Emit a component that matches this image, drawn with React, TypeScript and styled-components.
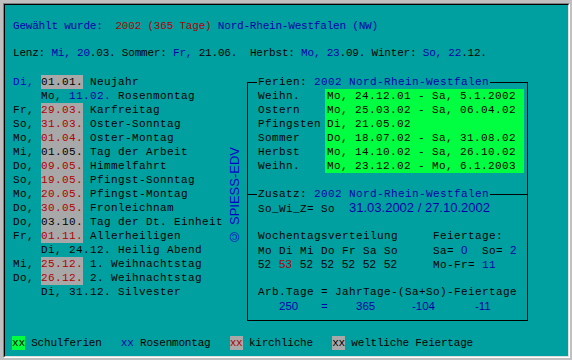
import styled, { createGlobalStyle } from "styled-components";

const C = {
  chrome: "#c0c0c0",
  teal: "#00a0a0",
  blue: "#0000a8",
  light: "#0000c8",
  red: "#b00000",
  gray: "#a8a8a8",
  green: "#00ff40",
  ink: "#000",
};

const MONO = `"Liberation Mono", "DejaVu Sans Mono", monospace`;
const SANS = `"Liberation Sans", Arial, sans-serif`;

const GlobalStyle = createGlobalStyle`
  html, body {
    margin: 0;
    padding: 0;
    background: ${C.chrome};
  }
`;

const Screen = styled.div`
  width: 572px;
  height: 360px;
  box-sizing: border-box;
  padding: 3px 2px 2px 3px;
  background: ${C.chrome};
`;

const Bevel = styled.div`
  height: 100%;
  box-sizing: border-box;
  border: 1px solid;
  border-color: #808080 #fff #fff #808080;
`;

const Panel = styled.div`
  height: 100%;
  box-sizing: border-box;
  border: 1px solid;
  border-color: #000 #dfdfdf #dfdfdf #000;
  background: ${C.teal};
  padding-left: 8px;
  font-family: ${MONO};
  font-size: 11px;
  line-height: 14px;
  color: ${C.ink};
  white-space: pre;
`;

const T = styled.span<{ $c?: string }>`
  color: ${(p) => p.$c ?? C.ink};
`;

const Sans = styled.span<{ $size?: number; $c?: string }>`
  font-family: ${SANS};
  font-size: ${(p) => p.$size ?? 11.5}px;
  letter-spacing: 0;
  color: ${(p) => p.$c ?? C.blue};
`;

const HeadLine = styled.div<{ $gap: number }>`
  height: 14px;
  margin-top: ${(p) => p.$gap}px;
  letter-spacing: -0.2px;
`;

const Main = styled.div`
  display: flex;
  align-items: flex-start;
  margin-top: 15px;
  letter-spacing: 0.4px;
`;

const HolidayList = styled.div`
  width: 216px;
`;

const Row = styled.div<{ $plain?: boolean }>`
  height: 14px;
  padding-left: ${(p) => (p.$plain ? 28 : 0)}px;
`;

const DateBox = styled.span<{ $c: string }>`
  display: inline-block;
  height: 14px;
  background: ${C.gray};
  color: ${(p) => p.$c};
`;

const Copyright = styled.div`
  width: 12px;
  margin: 72px 6px 0 0;
  writing-mode: vertical-rl;
  transform: rotate(180deg);
  font-family: ${SANS};
  font-size: 13px;
  line-height: 12px;
  letter-spacing: 0;
  color: ${C.light};
`;

const Frame = styled.fieldset`
  margin: 0;
  padding: 0 0 7px 0;
  min-width: 0;
  width: 281px;
  box-sizing: border-box;
  border: 1px solid #000;
`;

const Title = styled.legend`
  margin-left: 9px;
  padding: 0 1px;
  line-height: 14px;
`;

const FerienBlock = styled.div`
  display: flex;
  padding-left: 10px;
`;

const Labels = styled.div`
  width: 67px;
`;

const Green = styled.div`
  width: 199px;
  box-sizing: border-box;
  padding-left: 2px;
  background: ${C.green};
`;

const Line = styled.div<{ $gap?: number }>`
  height: 14px;
  padding-left: 10px;
  margin-top: ${(p) => p.$gap ?? 0}px;
`;

const Divider = styled.div`
  display: flex;
  align-items: center;
  height: 14px;
  margin-top: 14px;

  &::before {
    content: "";
    width: 9px;
    height: 1px;
    background: #000;
  }
  &::after {
    content: "";
    flex: 1;
    height: 1px;
    background: #000;
  }
`;

const DividerText = styled.span`
  padding: 0 1px;
`;

const Cell = styled.span<{ $n: number }>`
  display: inline-block;
  width: ${(p) => p.$n * 7}px;
`;

const LegendRow = styled.div`
  margin-top: 15px;
  margin-left: -1px;
  height: 14px;
  letter-spacing: -0.2px;
`;

const Swatch = styled.span<{ $bg?: string; $c: string }>`
  display: inline-block;
  height: 14px;
  background: ${(p) => p.$bg ?? "transparent"};
  color: ${(p) => p.$c};
`;

type Holiday = {
  wd: string;
  date: string;
  name: string;
  kind?: "kirch" | "welt";
  wdBlue?: boolean;
  dateBlue?: boolean;
};

const holidays: Holiday[] = [
  { wd: "Di,", date: "01.01.", name: "Neujahr", kind: "welt", wdBlue: true },
  { wd: "Mo,", date: "11.02.", name: "Rosenmontag", dateBlue: true },
  { wd: "Fr,", date: "29.03.", name: "Karfreitag", kind: "kirch" },
  { wd: "So,", date: "31.03.", name: "Oster-Sonntag", kind: "kirch" },
  { wd: "Mo,", date: "01.04.", name: "Oster-Montag", kind: "kirch" },
  { wd: "Mi,", date: "01.05.", name: "Tag der Arbeit", kind: "welt" },
  { wd: "Do,", date: "09.05.", name: "Himmelfahrt", kind: "kirch" },
  { wd: "So,", date: "19.05.", name: "Pfingst-Sonntag", kind: "kirch" },
  { wd: "Mo,", date: "20.05.", name: "Pfingst-Montag", kind: "kirch" },
  { wd: "Do,", date: "30.05.", name: "Fronleichnam", kind: "kirch" },
  { wd: "Do,", date: "03.10.", name: "Tag der Dt. Einheit", kind: "welt" },
  { wd: "Fr,", date: "01.11.", name: "Allerheiligen", kind: "kirch" },
  { wd: "Di,", date: "24.12.", name: "Heilig Abend" },
  { wd: "Mi,", date: "25.12.", name: "1. Weihnachtstag", kind: "kirch" },
  { wd: "Do,", date: "26.12.", name: "2. Weihnachtstag", kind: "kirch" },
  { wd: "Di,", date: "31.12.", name: "Silvester" },
];

const ferien = [
  ["Weihn.", "Mo, 24.12.01 - Sa, 5.1.2002"],
  ["Ostern", "Mo, 25.03.02 - Sa, 06.04.02"],
  ["Pfingsten", "Di, 21.05.02"],
  ["Sommer", "Do, 18.07.02 - Sa, 31.08.02"],
  ["Herbst", "Mo, 14.10.02 - Sa, 26.10.02"],
  ["Weihn.", "Mo, 23.12.02 - Mo, 6.1.2003"],
];

const weekCounts = [52, 53, 52, 52, 52, 52, 52];

function HolidayRow({ h }: { h: Holiday }) {
  if (!h.kind) {
    return (
      <Row $plain>
        <T>{h.wd} </T>
        <T $c={h.dateBlue ? C.blue : C.ink}>{h.date}</T>
        <T> {h.name}</T>
      </Row>
    );
  }
  return (
    <Row>
      <T $c={h.wdBlue ? C.light : C.ink}>{h.wd} </T>
      <DateBox $c={h.kind === "kirch" ? C.red : C.ink}>{h.date}</DateBox>
      <T> {h.name}</T>
    </Row>
  );
}

export default function App() {
  return (
    <Screen>
      <GlobalStyle />
      <Bevel>
        <Panel>
          <HeadLine $gap={14}>
            <T $c={C.blue}>Gewählt wurde:  </T>
            <T $c={C.red}>2002 (365 Tage)</T>
            <T $c={C.blue}> Nord-Rhein-Westfalen (NW)</T>
          </HeadLine>
          <HeadLine $gap={13}>
            <T>Lenz: </T>
            <T $c={C.blue}>Mi, 20</T>
            <T>.03. Sommer: </T>
            <T $c={C.blue}>Fr, </T>
            <T>21.06.  Herbst: </T>
            <T $c={C.blue}>Mo, 23</T>
            <T>.09. Winter: </T>
            <T $c={C.blue}>So, 22</T>
            <T>.12.</T>
          </HeadLine>

          <Main>
            <HolidayList>
              {holidays.map((h, i) => (
                <HolidayRow key={i} h={h} />
              ))}
            </HolidayList>

            <Copyright>© SPIESS-EDV</Copyright>

            <Frame>
              <Title>
                <T>Ferien: </T>
                <T $c={C.blue}>2002 Nord-Rhein-Westfalen</T>
              </Title>
              <FerienBlock>
                <Labels>
                  {ferien.map(([label], i) => (
                    <div key={i}>{label}</div>
                  ))}
                </Labels>
                <Green>
                  {ferien.map(([, range], i) => (
                    <div key={i}>{range}</div>
                  ))}
                </Green>
              </FerienBlock>

              <Divider>
                <DividerText>
                  <T>Zusatz: </T>
                  <T $c={C.blue}>2002 Nord-Rhein-Westfalen</T>
                </DividerText>
              </Divider>
              <Line>
                <T>So_Wi_Z= So  </T>
                <Sans $size={13}>31.03.2002 / 27.10.2002</Sans>
              </Line>

              <Line $gap={14}>Wochentagsverteilung     Feiertage:</Line>
              <Line>
                <T>Mo Di Mi Do Fr Sa So     Sa= </T>
                <Cell $n={1}>
                  <Sans>0</Sans>
                </Cell>
                <T>  So= </T>
                <Cell $n={1}>
                  <Sans>2</Sans>
                </Cell>
              </Line>
              <Line>
                {weekCounts.map((n, i) => (
                  <Cell key={i} $n={3}>
                    <Sans $c={i === 1 ? C.red : C.ink}>{n}</Sans>
                  </Cell>
                ))}
                <T>    Mo-Fr= </T>
                <T $c={C.blue}>11</T>
              </Line>

              <Line $gap={14}>Arb.Tage = JahrTage-(Sa+So)-Feiertage</Line>
              <Line>
                <Cell $n={3} />
                <Cell $n={6}>
                  <Sans>250</Sans>
                </Cell>
                <Cell $n={5}>
                  <Sans>=</Sans>
                </Cell>
                <Cell $n={8}>
                  <Sans>365</Sans>
                </Cell>
                <Cell $n={9}>
                  <Sans>-104</Sans>
                </Cell>
                <Sans>-11</Sans>
              </Line>
            </Frame>
          </Main>

          <LegendRow>
            <Swatch $bg={C.green} $c={C.ink}>xx</Swatch>
            <T> Schulferien   </T>
            <Swatch $c={C.blue}>xx</Swatch>
            <T> Rosenmontag   </T>
            <Swatch $bg={C.gray} $c={C.red}>xx</Swatch>
            <T> kirchliche   </T>
            <Swatch $bg={C.gray} $c={C.ink}>xx</Swatch>
            <T> weltliche Feiertage</T>
          </LegendRow>
        </Panel>
      </Bevel>
    </Screen>
  );
}
